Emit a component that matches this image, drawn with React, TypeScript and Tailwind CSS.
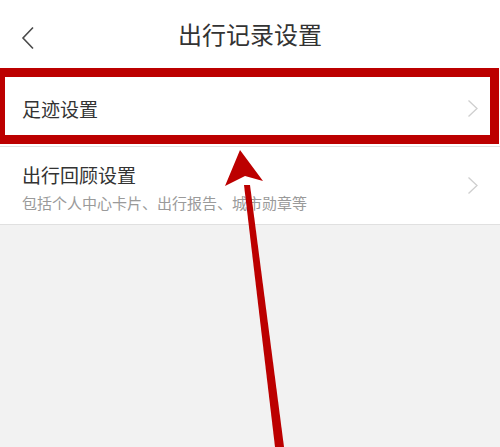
import React from "react";

const font = { fontFamily: '"Noto Sans CJK SC", "Noto Sans", sans-serif' };

function Chevron() {
  return (
    <svg width="12" height="19" viewBox="0 0 12 19" fill="none">
      <path d="M1.5 1.5 L10 9.5 L1.5 17.5" stroke="#cfcfcf" strokeWidth="1.3" />
    </svg>
  );
}

export default function App() {
  return (
    <div className="relative w-[500px] h-[447px] overflow-hidden bg-[#f2f2f2]" style={font}>
      <div className="h-[68px] bg-white flex items-center relative">
        <div className="absolute left-[21px] top-[26px]">
          <svg width="14" height="24" viewBox="0 0 14 24" fill="none">
            <path d="M12 1.5 L2 12 L12 22.5" stroke="#4a4a4a" strokeWidth="1.6" />
          </svg>
        </div>
        <div className="w-full text-center text-[24px] text-[#333] leading-none pb-[1px]">出行记录设置</div>
      </div>
      <div className="h-[79px] bg-white border-b border-[#e3e3e3] flex items-center justify-between pl-[22px] pr-[21px] pt-[3px]">
        <span className="text-[19px] text-[#333] leading-none">足迹设置</span>
        <Chevron />
      </div>
      <div className="h-[78px] bg-white border-b border-[#e0e0e0] flex items-center justify-between pl-[22px] pr-[21px]">
        <div className="flex flex-col pt-[4px]">
          <span className="text-[19px] text-[#333] leading-none">出行回顾设置</span>
          <span className="text-[15px] text-[#9a9a9a] leading-none mt-[11px]">包括个人中心卡片、出行报告、城市勋章等</span>
        </div>
        <Chevron />
      </div>
      <div className="absolute left-[-4px] top-[68px] w-[503px] h-[76px] border-[9px] border-[#bc0000]" />
      <svg className="absolute left-0 top-0" width="500" height="447" viewBox="0 0 500 447">
        <polygon points="275,447 284,447 250,185 244,185" fill="#bc0000" />
        <polygon points="240,150 225,186 245,176 263,181" fill="#bc0000" />
      </svg>
    </div>
  );
}
